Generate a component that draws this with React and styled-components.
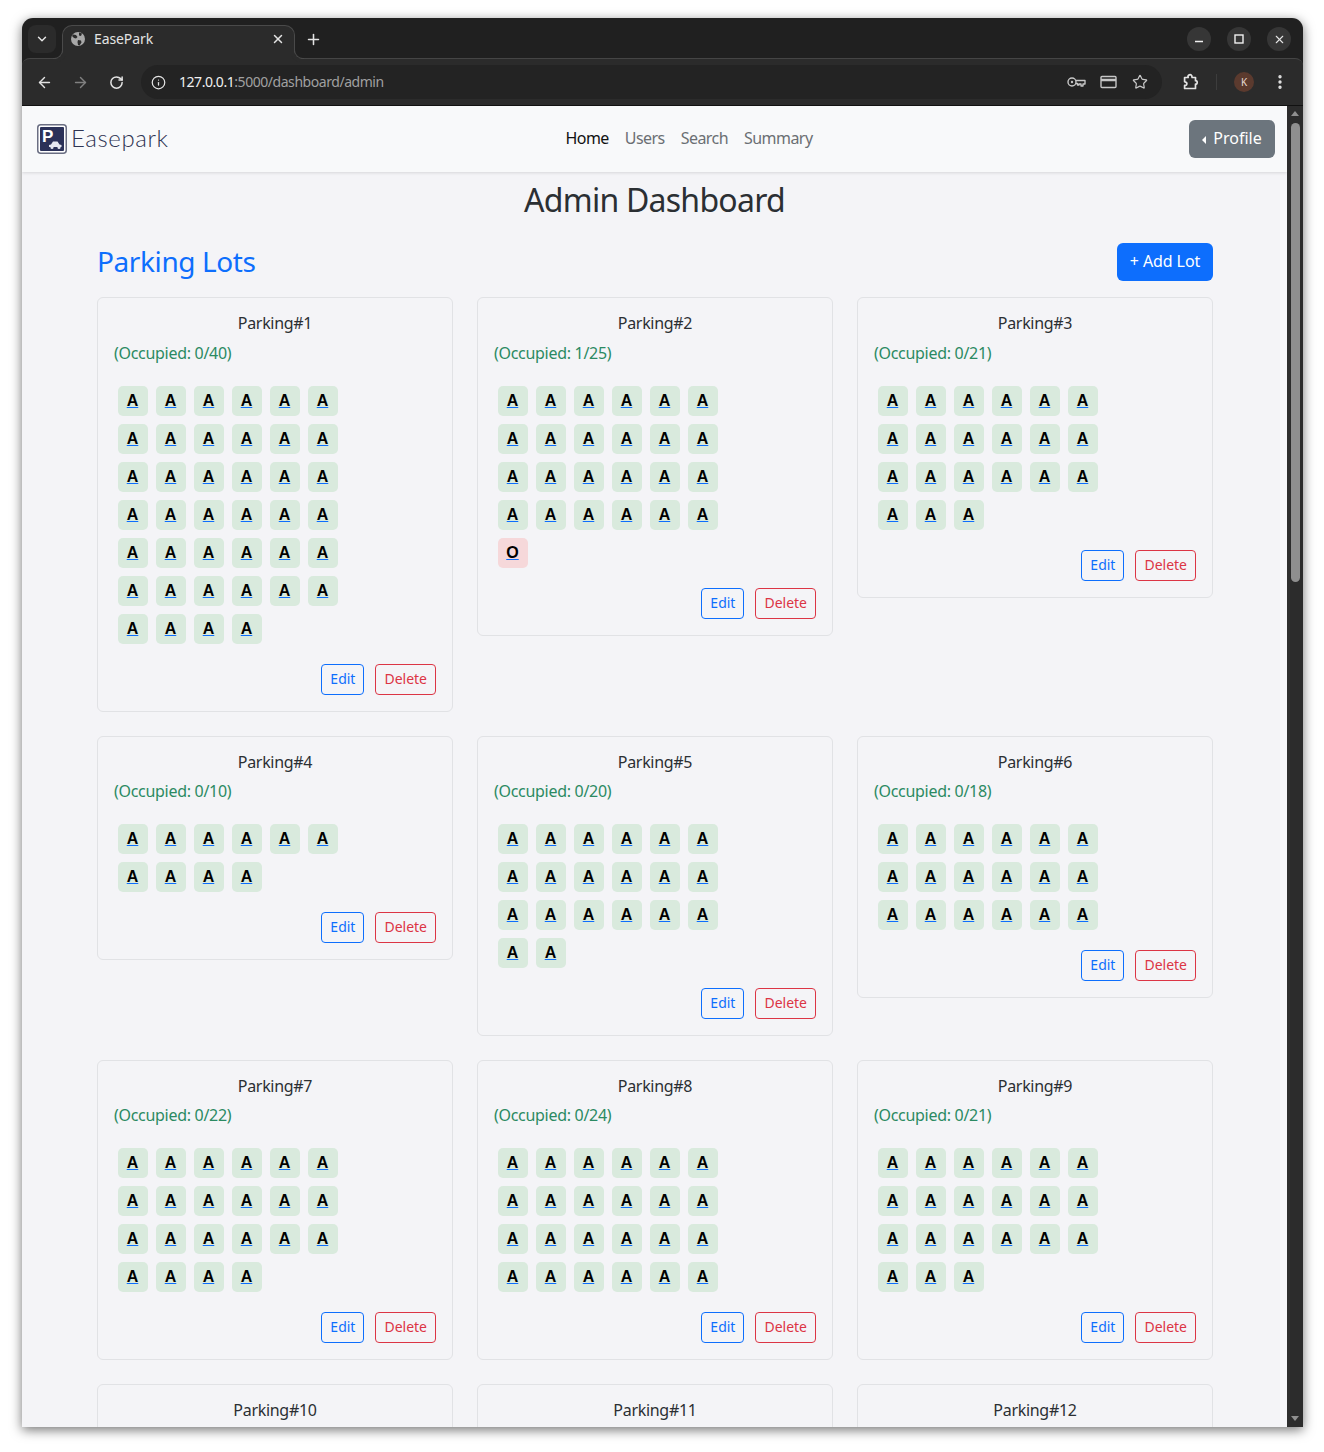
import React from "react";
import styled, { createGlobalStyle } from "styled-components";
import { ArrowLeft, ArrowRight, ChevronDown, EllipsisVertical, Info, Plus, RotateCw, Star, X } from "lucide-react";

const Global = createGlobalStyle`
  html, body { margin: 0; padding: 0; background: #fff; height: 1452px; overflow: hidden; }
  body { font-family: "Noto Sans", "Open Sans", sans-serif; }
  * { box-sizing: border-box; }
`;

const Screen = styled.div`
  padding: 18px 21px 0 22px;
`;

const Window = styled.div`
  height: 1409px;
  display: flex;
  flex-direction: column;
  overflow: hidden;
  border-radius: 11px 11px 0 0;
  background: #202020;
  box-shadow: 0 3px 12px rgba(0, 0, 0, 0.55);
`;

const TabBar = styled.div`
  height: 40px;
  flex: none;
  display: flex;
  align-items: flex-end;
  padding: 0 12px 0 6px;
  color: #e3e3e3;
`;

const TabSearch = styled.div`
  width: 28px;
  height: 28px;
  margin: 0 6px 5px 0;
  border-radius: 8px;
  background: #2b2b2b;
  display: flex;
  align-items: center;
  justify-content: center;
`;

const Tab = styled.div`
  position: relative;
  z-index: 1;
  width: 233px;
  height: 34px;
  margin-bottom: -1px;
  padding: 0 9px 8px 7px;
  display: flex;
  align-items: center;
  gap: 8px;
  background: #2b2b2b;
  border: 1px solid #4a4a4a;
  border-bottom: 0;
  border-radius: 10px 10px 0 0;
  font-size: 14px;

  &::before,
  &::after {
    content: "";
    position: absolute;
    bottom: 0;
    width: 9px;
    height: 9px;
    border-bottom: 1px solid #4a4a4a;
  }
  &::before {
    right: 100%;
    border-right: 1px solid #4a4a4a;
    border-bottom-right-radius: 9px;
    box-shadow: 3px 3px 0 #2b2b2b;
  }
  &::after {
    left: 100%;
    border-left: 1px solid #4a4a4a;
    border-bottom-left-radius: 9px;
    box-shadow: -3px 3px 0 #2b2b2b;
  }
`;

const TabTitle = styled.span`
  flex: 1;
  letter-spacing: -0.1px;
`;

const NewTab = styled.div`
  width: 28px;
  height: 28px;
  margin: 0 0 5px 4px;
  display: flex;
  align-items: center;
  justify-content: center;
`;

const WindowControls = styled.div`
  margin-left: auto;
  margin-bottom: 7px;
  display: flex;
  gap: 16px;
`;

const WindowButton = styled.div`
  width: 24px;
  height: 24px;
  border-radius: 50%;
  background: #363636;
  display: flex;
  align-items: center;
  justify-content: center;
`;

const ToolBar = styled.div`
  height: 48px;
  flex: none;
  display: flex;
  align-items: center;
  padding: 0 14px 0 13px;
  background: #2b2b2b;
  border-top: 1px solid #454545;
  border-bottom: 1px solid #111;
  border-radius: 8px 8px 0 0;
  color: #e3e3e3;
`;

const NavIcon = styled.div`
  width: 18px;
  margin-right: 18px;
  display: flex;
  justify-content: center;
  color: ${(p) => (p.$off ? "#808080" : "#e3e3e3")};
`;

const Omnibox = styled.div`
  flex: 1;
  height: 34px;
  margin: 0 19px 0 -2px;
  padding: 0 12px 2px 7px;
  display: flex;
  align-items: center;
  background: #232323;
  border-radius: 17px;
  font-size: 14px;
`;

const SiteInfo = styled.div`
  width: 20px;
  height: 20px;
  margin: 2px 11px 0 0;
  display: flex;
  align-items: center;
  justify-content: center;
`;

const Host = styled.span`
  color: #f0f0f0;
  letter-spacing: -0.45px;
`;

const UrlRest = styled.span`
  color: #a0a0a0;
  letter-spacing: -0.45px;
`;

const OmniIcons = styled.div`
  margin: 2px 0 0 auto;
  display: flex;
  align-items: center;
  gap: 12px;
  color: #c7c7c7;
`;

const OmniIcon = styled.div`
  width: 20px;
  display: flex;
  justify-content: center;
`;

const Extensions = styled.div`
  margin-left: 1px;
  display: flex;
`;

const Divider = styled.div`
  width: 1px;
  height: 16px;
  margin: 0 17px 0 16px;
  background: #3d3d3d;
`;

const Avatar = styled.div`
  width: 20px;
  height: 20px;
  margin-right: 17px;
  border-radius: 50%;
  background: #5b3a2e;
  color: #e8dcd6;
  font-size: 10px;
  display: flex;
  align-items: center;
  justify-content: center;
`;

const Viewport = styled.div`
  flex: 1;
  min-height: 0;
  display: flex;
`;

const Page = styled.div`
  flex: 1;
  min-width: 0;
  overflow: hidden;
  background: #f4f4f7;
  color: #212529;
`;

const NavBar = styled.nav`
  height: 66px;
  padding: 0 12px 0 15px;
  display: flex;
  align-items: center;
  justify-content: space-between;
  background: #f8f9fa;
  box-shadow: 0 1px 3px rgba(0, 0, 0, 0.12);
`;

const Brand = styled.div`
  width: 152px;
  display: flex;
  align-items: center;
  gap: 4px;
`;

const BrandName = styled.span`
  padding-bottom: 4px;
  font-family: Lato, sans-serif;
  font-weight: 300;
  font-size: 24px;
  letter-spacing: 0.6px;
  color: #2f3452;
`;

const NavLinks = styled.div`
  display: flex;
`;

const NavLink = styled.a`
  padding: 0 8px 2px;
  font-size: 16px;
  line-height: 24px;
  letter-spacing: -0.55px;
  color: ${(p) => (p.$active ? "#111" : "#6b6f73")};
`;

const ProfileButton = styled.div`
  width: 86px;
  height: 38px;
  padding-bottom: 2px;
  border-radius: 6px;
  background: #6c757d;
  color: #fff;
  font-size: 16px;
  display: flex;
  align-items: center;
  justify-content: center;
  gap: 7px;
`;

const Caret = styled.span`
  width: 0;
  height: 0;
  margin-top: 4px;
  border-top: 4px solid transparent;
  border-bottom: 4px solid transparent;
  border-right: 4px solid #fff;
`;

const Title = styled.h1`
  margin: 9px 0 24px;
  text-align: center;
  font-size: 32px;
  line-height: 38.4px;
  font-weight: 400;
  letter-spacing: -0.75px;
  color: #2b2f33;
`;

const Content = styled.main`
  padding: 0 74px 0 75px;
`;

const SectionHead = styled.div`
  height: 38px;
  margin-bottom: 16px;
  display: flex;
  align-items: center;
  justify-content: space-between;
`;

const SectionTitle = styled.h2`
  margin: 0;
  padding-bottom: 2px;
  font-size: 28px;
  font-weight: 400;
  letter-spacing: -0.4px;
  color: #0d6efd;
`;

const AddButton = styled.div`
  width: 96px;
  height: 38px;
  padding-bottom: 2px;
  border-radius: 6px;
  background: #0d6efd;
  color: #fff;
  font-size: 16px;
  letter-spacing: -0.1px;
  display: flex;
  align-items: center;
  justify-content: center;
`;

const LotGrid = styled.div`
  display: grid;
  grid-template-columns: repeat(3, 356px);
  gap: 24px;
  align-items: start;
`;

const LotCard = styled.section`
  padding: 16px;
  background: #f4f4f7;
  border: 1px solid #e1e2e5;
  border-radius: 6px;
  min-height: ${(p) => (p.$cut ? "120px" : "0")};
`;

const LotName = styled.h5`
  margin: 0 0 8px;
  text-align: center;
  font-size: 16px;
  line-height: 19.2px;
  font-weight: 400;
  letter-spacing: -0.3px;
  color: #2b2f33;
`;

const Occupied = styled.p`
  margin: 0 0 18px;
  font-size: 16px;
  line-height: 22px;
  letter-spacing: -0.3px;
  color: #2b8a62;
`;

const Spots = styled.div`
  display: grid;
  grid-template-columns: repeat(6, 30px);
  gap: 8px;
  padding: 4px 4px 0;
`;

const Spot = styled.a`
  width: 30px;
  height: 30px;
  border-radius: 5px;
  background: ${(p) => (p.$taken ? "#f6d8da" : "#d9eadd")};
  display: flex;
  align-items: center;
  justify-content: center;
  color: #0d6efd;
  text-decoration: underline;
  font-family: "Liberation Sans", sans-serif;
  font-size: 16px;
  font-weight: 700;
`;

const SpotLetter = styled.span`
  margin-left: -1px;
  color: #000;
`;

const Actions = styled.div`
  margin-top: 20px;
  display: flex;
  justify-content: flex-end;
  gap: 11px;
`;

const ActionButton = styled.div`
  height: 31px;
  padding: 0 8px 2px;
  border: 1px solid ${(p) => p.$color};
  border-radius: 4px;
  color: ${(p) => p.$color};
  font-size: 14px;
  display: flex;
  align-items: center;
`;

const ScrollTrack = styled.div`
  width: 16px;
  flex: none;
  padding: 3px 0;
  display: flex;
  flex-direction: column;
  align-items: center;
  background: #2c2c2c;
`;

const ArrowUp = styled.div`
  width: 0;
  height: 0;
  margin: 2px 0 7px;
  border-left: 4px solid transparent;
  border-right: 4px solid transparent;
  border-bottom: 5px solid #8f8f8f;
`;

const ArrowDown = styled.div`
  width: 0;
  height: 0;
  margin: auto 0 3px;
  border-left: 4px solid transparent;
  border-right: 4px solid transparent;
  border-top: 5px solid #8f8f8f;
`;

const ScrollThumb = styled.div`
  width: 9px;
  height: 459px;
  border-radius: 5px;
  background: #8f8f8f;
`;

const lots = [
  { name: "Parking#1", total: 40, taken: 0 },
  { name: "Parking#2", total: 25, taken: 1 },
  { name: "Parking#3", total: 21, taken: 0 },
  { name: "Parking#4", total: 10, taken: 0 },
  { name: "Parking#5", total: 20, taken: 0 },
  { name: "Parking#6", total: 18, taken: 0 },
  { name: "Parking#7", total: 22, taken: 0 },
  { name: "Parking#8", total: 24, taken: 0 },
  { name: "Parking#9", total: 21, taken: 0 },
  { name: "Parking#10" },
  { name: "Parking#11" },
  { name: "Parking#12" },
];

const GlobeIcon = () => (
  <svg width="16" height="16" viewBox="0 0 16 16">
    <circle cx="8" cy="8" r="7" fill="#a8a8a8" />
    <path d="M3 3.500l3 .5 1.500 2-1.500 1.500-2-.5-2-2zM9 1.500l3 1-1 2.500-2-.5zM8 9l3 .5.5 2-2 3-1.500-.5-.5-3z" fill="#2b2b2b" />
  </svg>
);

const MinimizeIcon = () => (
  <svg width="12" height="12" viewBox="0 0 12 12" stroke="#f0f0f0" strokeWidth="1.400">
    <path d="M2 8.500h8" />
  </svg>
);

const MaximizeIcon = () => (
  <svg width="12" height="12" viewBox="0 0 12 12" fill="none" stroke="#f0f0f0" strokeWidth="1.400">
    <rect x="2" y="2" width="8" height="8" />
  </svg>
);

const KeyIcon = () => (
  <svg width="19" height="12" viewBox="0 0 19 12" fill="none" stroke="#c7c7c7" strokeWidth="1.400">
    <circle cx="5" cy="6" r="4" />
    <circle cx="5" cy="6" r="1.200" fill="#c7c7c7" stroke="none" />
    <path d="M9 4.500h9v3.500h-2v2h-2v-2h-2v1h-1.500V7.500H9" strokeLinejoin="round" />
  </svg>
);

const CardIcon = () => (
  <svg width="17" height="14" viewBox="0 0 17 14" fill="none" stroke="#c7c7c7" strokeWidth="1.400">
    <rect x="1" y="1.500" width="15" height="11" rx="1" />
    <path d="M1 5h15" strokeWidth="2.400" />
  </svg>
);

const PuzzleIcon = () => (
  <svg width="18" height="18" viewBox="0 0 18 18" fill="none" stroke="#e3e3e3" strokeWidth="1.700" strokeLinejoin="round">
    <path d="M3 4.500h3.200a1.900 1.900 0 0 1 3.600-1.600l.3 1.600h3.400v3.200a1.700 1.700 0 0 1 0 3.400v4.400H2.600v-3.100a1.700 1.700 0 0 0 1-3.300l-1-.3V4.500z" />
  </svg>
);

const Logo = () => (
  <svg width="30" height="30" viewBox="0 0 30 30">
    <rect x="0.750" y="0.750" width="28.500" height="28.500" rx="3" fill="#fff" stroke="#6a6e82" strokeWidth="1.500" />
    <rect x="3" y="3" width="24" height="24" rx="1" fill="#2b3158" />
    <text x="5" y="18" fontFamily="Liberation Sans, sans-serif" fontWeight="700" fontSize="17" fill="#fff">P</text>
    <path d="M12 23v-2l2-.5 2-3h4.500l2 3 2 .5v2z" fill="#e6e8f0" />
    <circle cx="15" cy="23.500" r="1.500" fill="#e6e8f0" />
    <circle cx="22" cy="23.500" r="1.500" fill="#e6e8f0" />
  </svg>
);

const App = () => {
  return (
    <Screen>
      <Global />
      <Window>
        <TabBar>
          <TabSearch><ChevronDown size={14} strokeWidth={2.5} /></TabSearch>
          <Tab>
            <GlobeIcon />
            <TabTitle>EasePark</TabTitle>
            <X size={14} strokeWidth={2.5} />
          </Tab>
          <NewTab><Plus size={17} strokeWidth={2.2} /></NewTab>
          <WindowControls>
            <WindowButton><MinimizeIcon /></WindowButton>
            <WindowButton><MaximizeIcon /></WindowButton>
            <WindowButton><X size={13} strokeWidth={2} /></WindowButton>
          </WindowControls>
        </TabBar>
        <ToolBar>
          <NavIcon><ArrowLeft size={17} strokeWidth={2} /></NavIcon>
          <NavIcon $off><ArrowRight size={17} strokeWidth={2} /></NavIcon>
          <NavIcon><RotateCw size={15} strokeWidth={2.4} /></NavIcon>
          <Omnibox>
            <SiteInfo><Info size={15} strokeWidth={2} /></SiteInfo>
            <Host>127.0.0.1</Host>
            <UrlRest>:5000/dashboard/admin</UrlRest>
            <OmniIcons>
              <OmniIcon><KeyIcon /></OmniIcon>
              <OmniIcon><CardIcon /></OmniIcon>
              <OmniIcon><Star size={16} strokeWidth={1.8} /></OmniIcon>
            </OmniIcons>
          </Omnibox>
          <Extensions><PuzzleIcon /></Extensions>
          <Divider />
          <Avatar>K</Avatar>
          <EllipsisVertical size={18} strokeWidth={2.5} />
        </ToolBar>
        <Viewport>
          <Page>
            <NavBar>
              <Brand>
                <Logo />
                <BrandName>Easepark</BrandName>
              </Brand>
              <NavLinks>
                <NavLink $active>Home</NavLink>
                <NavLink>Users</NavLink>
                <NavLink>Search</NavLink>
                <NavLink>Summary</NavLink>
              </NavLinks>
              <ProfileButton><Caret />Profile</ProfileButton>
            </NavBar>
            <Title>Admin Dashboard</Title>
            <Content>
              <SectionHead>
                <SectionTitle>Parking Lots</SectionTitle>
                <AddButton>+ Add Lot</AddButton>
              </SectionHead>
              <LotGrid>
                {lots.map((lot) => (
                  <LotCard key={lot.name} $cut={!lot.total}>
                    <LotName>{lot.name}</LotName>
                    {lot.total && (
                      <>
                        <Occupied>(Occupied: {lot.taken}/{lot.total})</Occupied>
                        <Spots>
                          {Array.from({ length: lot.total }, (_, i) => {
                            const taken = i >= lot.total - lot.taken;
                            return (
                              <Spot key={i} $taken={taken}>
                                <SpotLetter>{taken ? "O" : "A"}</SpotLetter>
                              </Spot>
                            );
                          })}
                        </Spots>
                        <Actions>
                          <ActionButton $color="#0d6efd">Edit</ActionButton>
                          <ActionButton $color="#dc3545">Delete</ActionButton>
                        </Actions>
                      </>
                    )}
                  </LotCard>
                ))}
              </LotGrid>
            </Content>
          </Page>
          <ScrollTrack>
            <ArrowUp />
            <ScrollThumb />
            <ArrowDown />
          </ScrollTrack>
        </Viewport>
      </Window>
    </Screen>
  );
};

export default App;
